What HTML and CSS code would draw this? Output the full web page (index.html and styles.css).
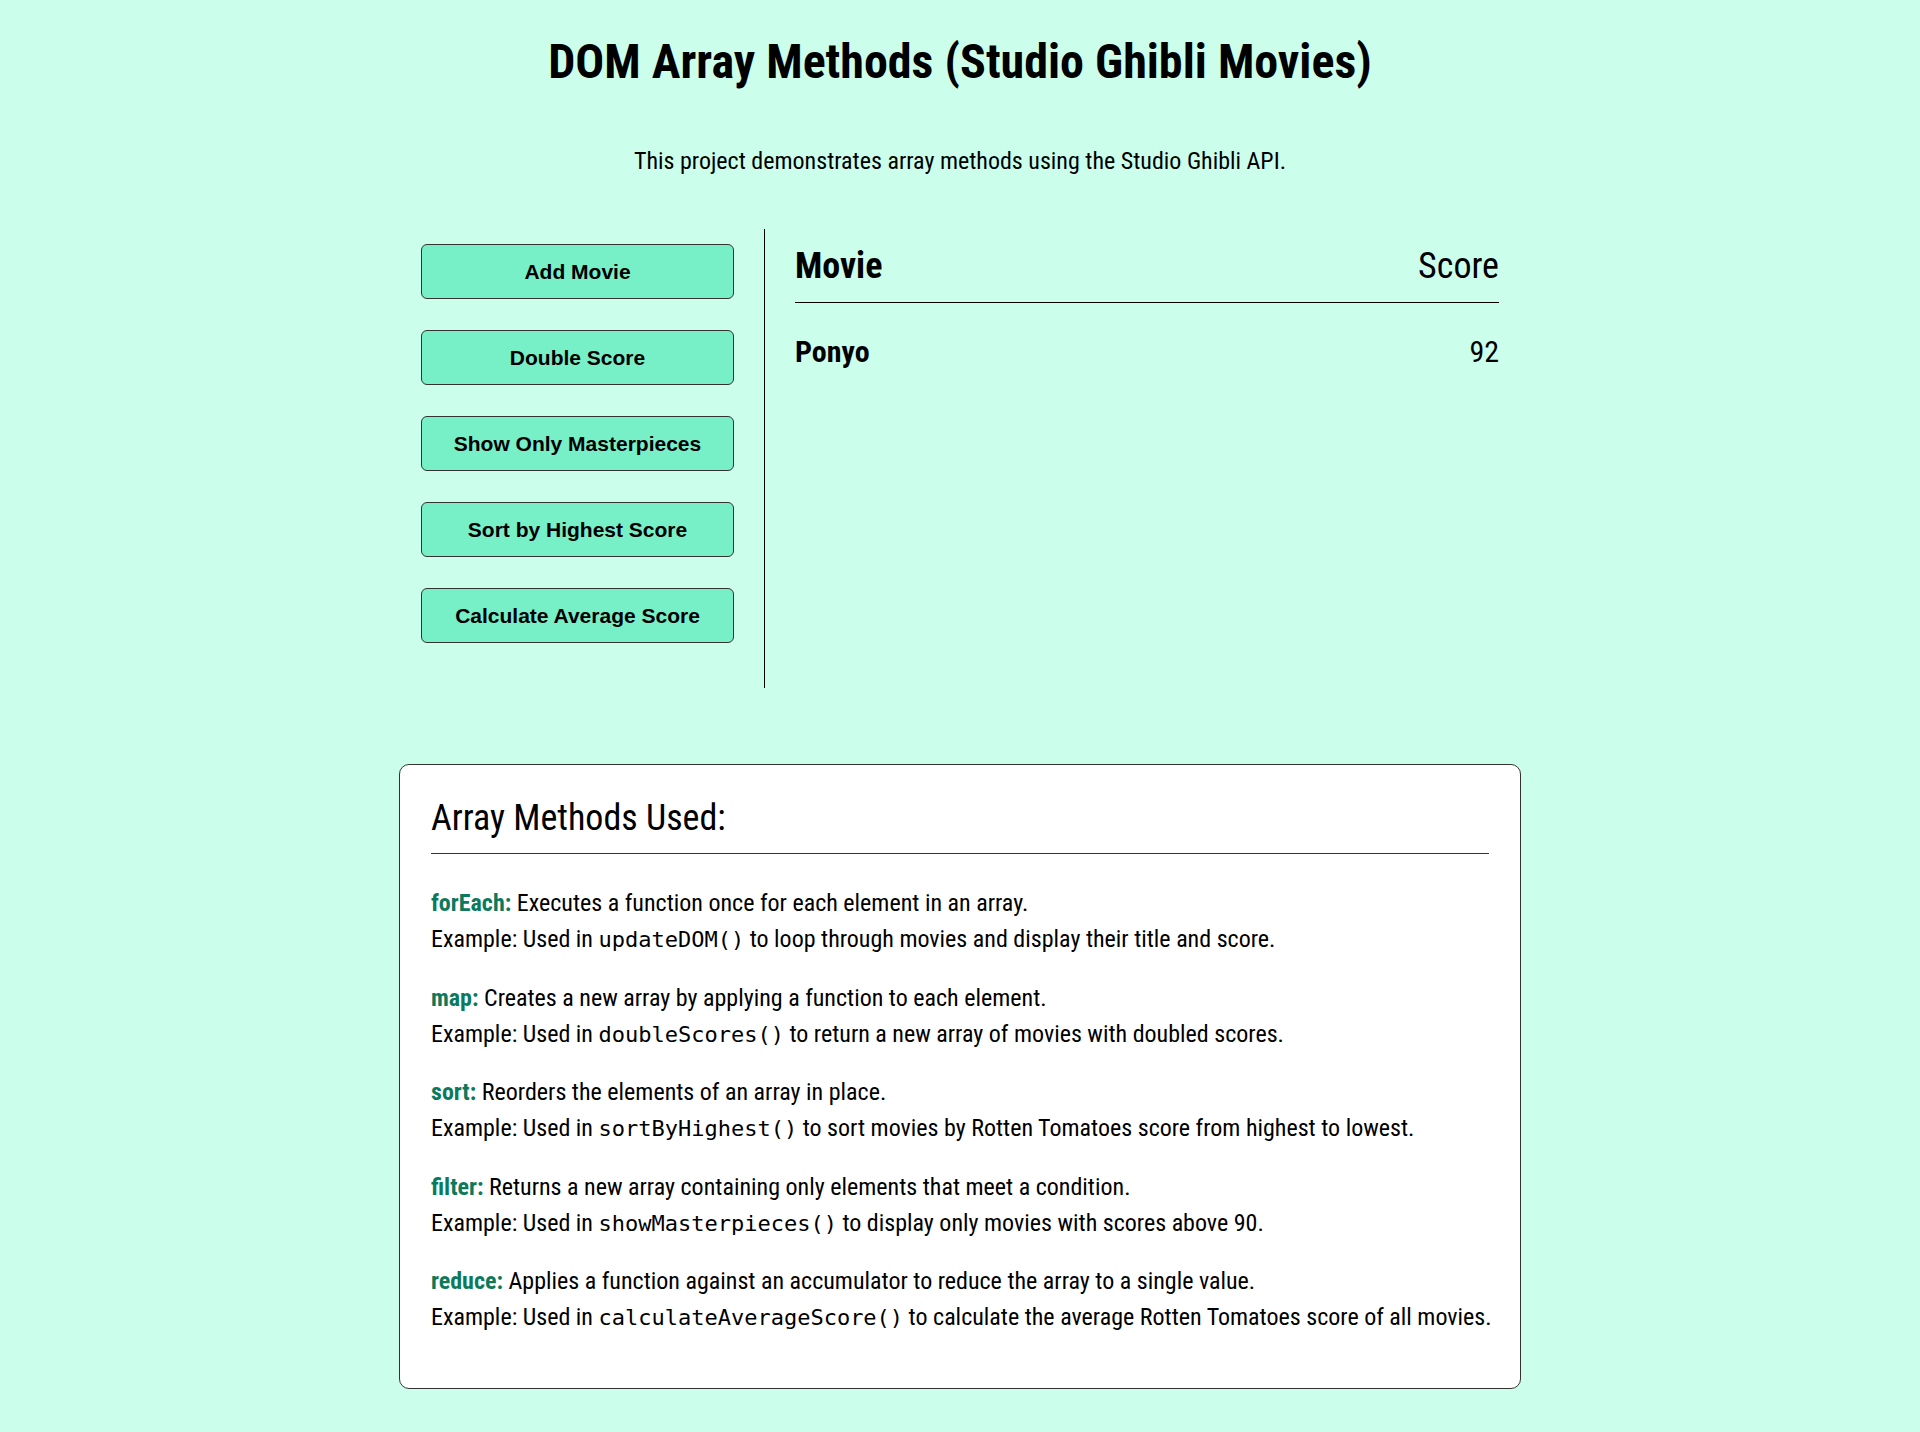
FILE: index.html
```html
<!DOCTYPE html>
<html lang="en">
<head>
<meta charset="UTF-8">
<title>DOM Array Methods (Studio Ghibli Movies)</title>
<link rel="stylesheet" href="styles.css">
</head>
<body>
  <h1 class="title">DOM Array Methods (Studio Ghibli Movies)</h1>
  <p class="subtitle">This project demonstrates array methods using the Studio Ghibli API.</p>

  <main class="main">
    <aside class="actions">
      <button class="btn">Add Movie</button>
      <button class="btn">Double Score</button>
      <button class="btn">Show Only Masterpieces</button>
      <button class="btn">Sort by Highest Score</button>
      <button class="btn">Calculate Average Score</button>
    </aside>
    <section class="table">
      <div class="row head"><span class="name">Movie</span><span class="score">Score</span></div>
      <div class="row item"><span class="name">Ponyo</span><span class="score">92</span></div>
    </section>
  </main>

  <section class="methods">
    <h2 class="methods-title">Array Methods Used:</h2>
    <p class="method"><strong class="m">forEach:</strong> Executes a function once for each element in an array.<br>Example: Used in <code class="code">updateDOM()</code> to loop through movies and display their title and score.</p>
    <p class="method"><strong class="m">map:</strong> Creates a new array by applying a function to each element.<br>Example: Used in <code class="code">doubleScores()</code> to return a new array of movies with doubled scores.</p>
    <p class="method"><strong class="m">sort:</strong> Reorders the elements of an array in place.<br>Example: Used in <code class="code">sortByHighest()</code> to sort movies by Rotten Tomatoes score from highest to lowest.</p>
    <p class="method"><strong class="m">filter:</strong> Returns a new array containing only elements that meet a condition.<br>Example: Used in <code class="code">showMasterpieces()</code> to display only movies with scores above 90.</p>
    <p class="method"><strong class="m">reduce:</strong> Applies a function against an accumulator to reduce the array to a single value.<br>Example: Used in <code class="code">calculateAverageScore()</code> to calculate the average Rotten Tomatoes score of all movies.</p>
  </section>
</body>
</html>
```

FILE: styles.css
```css
* { box-sizing: border-box; }

body {
  margin: 0;
  background: #ccfeec;
  color: #000;
  font-family: "Roboto Condensed", Roboto, "Liberation Sans Narrow", sans-serif;
  font-stretch: condensed;
}

.title {
  margin: 31px 0 0;
  font-size: 48px;
  line-height: 62px;
  font-weight: 700;
  text-align: center;
}

.subtitle {
  margin: 53px 0 0;
  font-size: 24px;
  line-height: 30px;
  text-align: center;
}

.main {
  display: flex;
  justify-content: center;
  margin-top: 53px;
}

.actions {
  display: flex;
  flex-direction: column;
  gap: 31px;
  width: 344px;
  padding: 15px 30px 45px 0;
  border-right: 1px solid #000;
}

.btn {
  width: 313px;
  height: 55px;
  background: #77efc7;
  border: 1px solid #333;
  border-radius: 6px;
  font-family: "Liberation Sans", Arial, sans-serif;
  font-weight: 700;
  font-size: 21px;
  color: #000;
  cursor: pointer;
}

.table {
  width: 734px;
  padding-left: 30px;
}

.row {
  display: flex;
  justify-content: space-between;
  align-items: baseline;
}

.head {
  padding: 16px 0 14px;
  font-size: 36px;
  line-height: 43px;
  border-bottom: 1px solid #000;
}

.head .name { font-weight: 700; }

.item {
  margin-top: 32px;
  font-size: 30px;
  line-height: 34px;
}

.item .name { font-weight: 700; }

.methods {
  width: 1122px;
  margin: 76px auto 45px;
  padding: 32px 31px 30px;
  background: #fff;
  border: 1px solid #333;
  border-radius: 10px;
}

.methods-title {
  margin: 0 0 31px;
  padding-bottom: 13px;
  font-size: 36px;
  line-height: 43px;
  font-weight: 400;
  border-bottom: 1px solid #333;
}

.method {
  margin: 0 0 21.5px;
  font-size: 24px;
  line-height: 36px;
  white-space: nowrap;
}

.m {
  color: #0b7a5c;
  font-weight: 700;
}

.code {
  font-family: "DejaVu Sans Mono", "Liberation Mono", monospace;
  font-size: 22px;
}
```
